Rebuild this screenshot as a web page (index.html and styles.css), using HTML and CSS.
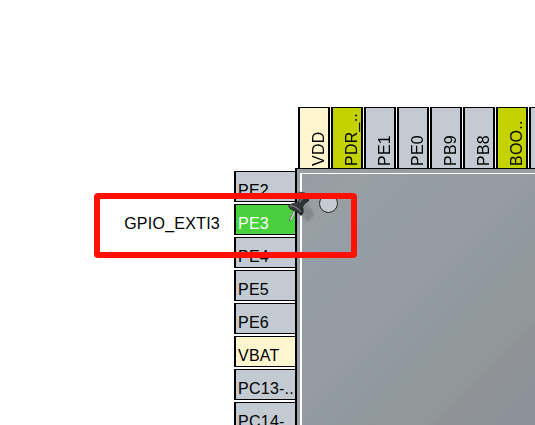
FILE: index.html
```html
<!DOCTYPE html>
<html lang="en">
<head>
<meta charset="utf-8">
<title>Pinout view</title>
<link rel="stylesheet" href="styles.css">
</head>
<body>
<main class="pinout">
  <div class="top-pins">
    <div class="vpin power"><span>VDD</span></div>
    <div class="vpin special"><span>PDR_..</span></div>
    <div class="vpin"><span>PE1</span></div>
    <div class="vpin"><span>PE0</span></div>
    <div class="vpin"><span>PB9</span></div>
    <div class="vpin"><span>PB8</span></div>
    <div class="vpin special"><span>BOO..</span></div>
    <div class="vpin"></div>
  </div>
  <div class="signals"><span>GPIO_EXTI3</span></div>
  <div class="left-pins">
    <div class="pin">PE2</div>
    <div class="pin active">PE3</div>
    <div class="pin">PE4</div>
    <div class="pin">PE5</div>
    <div class="pin">PE6</div>
    <div class="pin power">VBAT</div>
    <div class="pin">PC13-..</div>
    <div class="pin">PC14-</div>
  </div>
  <div class="chip"><div class="die"><div class="marker"></div></div></div>
  <svg class="pushpin" width="40" height="40" viewBox="0 0 40 40">
    <defs>
      <linearGradient id="metal" x1="0" y1="0" x2="1" y2="1">
        <stop offset="0" stop-color="#777"/><stop offset=".4" stop-color="#3a3c3e"/><stop offset="1" stop-color="#181a1b"/>
      </linearGradient>
      <filter id="soft"><feGaussianBlur stdDeviation="1.3"/></filter>
      <filter id="edge"><feGaussianBlur stdDeviation=".5"/></filter>
    </defs>
    <path d="M20 24 L26 17 L32 23 L34 28 L28 35 L24 31Z" fill="#6c7277" opacity=".5" filter="url(#soft)"/>
    <g filter="url(#edge)">
      <path d="M14 25 L9.5 34" stroke="#747a76" stroke-width="2.6"/>
      <path d="M14.5 25 L10.5 33" stroke="#d5dbd5" stroke-width="1.2"/>
      <path d="M18 5 Q24 4 28 8 Q30 11 29 14 L25 17 L23 20 Q25 26 21 29 Q18 25 14 24 Q9 23 8 19 Q10 16 17 15 L19 12Z" fill="url(#metal)"/>
      <path d="M10 19 Q15 18 21 25 M19 15 L24 10" fill="none" stroke="#999" stroke-width="1.3" opacity=".7"/>
    </g>
  </svg>
  <div class="highlight"></div>
</main>
</body>
</html>
```
FILE: styles.css
```css
body {
  margin: 0;
  background: #fff;
}

.pinout {
  position: relative;
  display: grid;
  grid-template: 168px 257px / 234px 61px 240px;
  width: 535px;
  height: 425px;
  overflow: hidden;
  font: 16px/18px "Liberation Sans", Arial, sans-serif;
  letter-spacing: .25px;
  color: #000;
}

.top-pins {
  grid-area: 1 / 3;
  display: flex;
  gap: 1px;
  padding: 107px 0 0 3px;
  overflow: hidden;
}

.vpin {
  box-sizing: border-box;
  flex: 0 0 32px;
  display: flex;
  align-items: center;
  border: 2px solid #000;
  border-top-width: 1px;
  border-bottom: 0;
  background: #c3cad2;
}

.vpin span {
  writing-mode: vertical-rl;
  transform: rotate(180deg);
  width: 18px;
  height: 60px;
  padding-top: 2px;
  box-sizing: border-box;
  margin-left: 10px;
  white-space: nowrap;
}

.signals {
  grid-area: 2 / 1;
  padding: 47px 14px 0 0;
  text-align: right;
}

.left-pins {
  grid-area: 2 / 2;
  display: flex;
  flex-direction: column;
  gap: 2px;
  padding-top: 3px;
  overflow: hidden;
}

.pin {
  box-sizing: border-box;
  flex: 0 0 31px;
  padding: 10px 0 0 2px;
  border: solid #000;
  border-width: 1px 0 1px 2px;
  background: #c3cad2;
  white-space: nowrap;
  overflow: hidden;
}

.vpin.power,
.pin.power {
  background: #fff5cf;
}

.vpin.special {
  background: #c4d200;
}

.pin.active {
  background: #48d13c;
  color: #fff;
}

.chip {
  grid-area: 2 / 3;
  box-sizing: border-box;
  padding: 4px 0 0 3px;
  border: solid #000;
  border-width: 1px 0 0 2px;
  background: #979ea5;
}

.die {
  box-sizing: border-box;
  height: 252px;
  padding: 20px 0 0 17px;
  border: solid #fff;
  border-width: 1px 0 0 2px;
  background: linear-gradient(135deg, #969ca4 0%, #999fa3 14%, #969fa5 17%, #959ca3 32%, #979ba4 40%, #969aa3 50%, #9099a1 53%, #9499a2 56%, #90999f 58%, #91999e 64%, #929797 67%, #929797 77%, #8f9399 80%, #8c9098 100%);
}

.marker {
  box-sizing: border-box;
  width: 19px;
  height: 19px;
  border: 1px solid #25292d;
  border-radius: 50%;
  background: #c3cad2;
}

.pushpin {
  position: absolute;
  left: 280px;
  top: 187px;
}

.highlight {
  position: absolute;
  box-sizing: border-box;
  left: 94px;
  top: 193px;
  width: 263px;
  height: 65px;
  border: 6.5px solid #ff1000;
  border-radius: 4px;
}
```
